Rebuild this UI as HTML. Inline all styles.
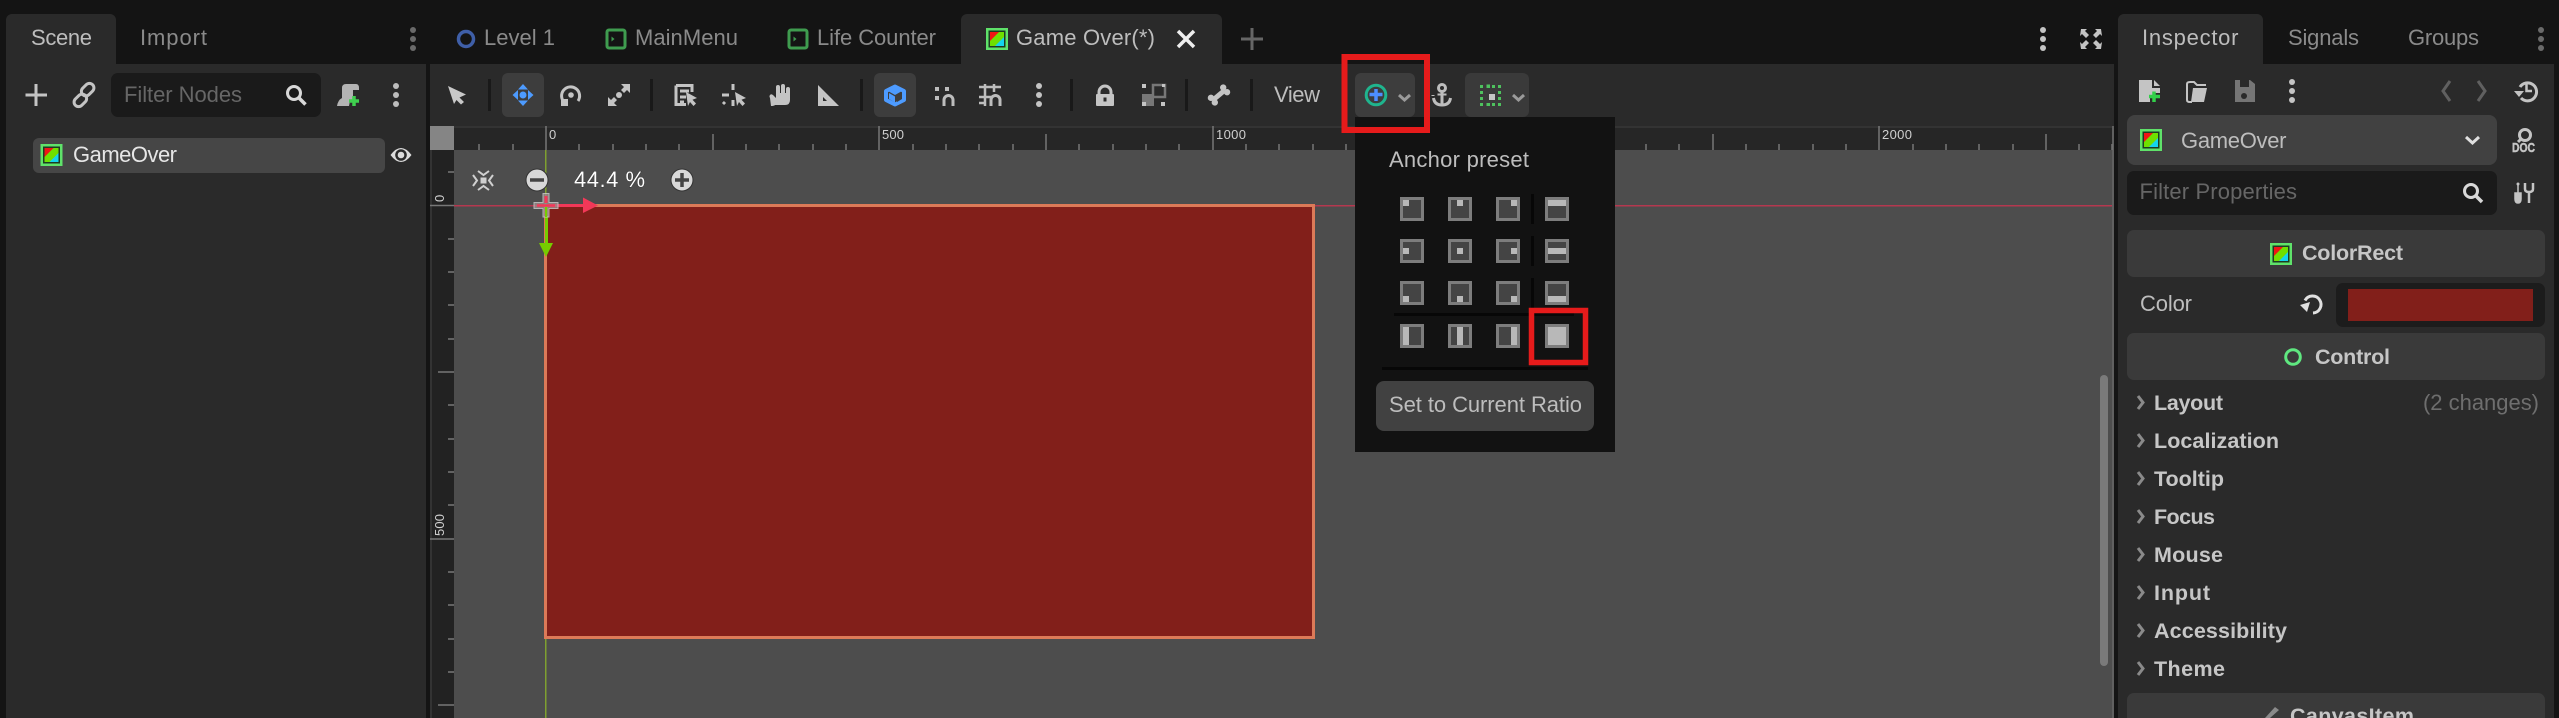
<!DOCTYPE html>
<html><head><meta charset="utf-8"><title>Godot Editor</title>
<style>
html,body{margin:0;padding:0;background:#141414;overflow:hidden;width:2559px;height:718px}
svg{display:block}
text{font-family:"Liberation Sans",sans-serif;font-size:22px;fill:#bdbdbd}
.d{fill:#8a8a8a}
.b{font-weight:700;fill:#c6c6c6;font-size:21.5px}
.r{font-size:13px;fill:#cfcfcf}
.p{fill:#666}
.i{fill:none;stroke:#c4c4c4;stroke-width:3}
</style></head><body>
<svg width="2559" height="718" viewBox="0 0 2559 718" xmlns="http://www.w3.org/2000/svg">
<defs>
<g id="n"><rect width="22" height="22" fill="#5fe26a"/><rect x="2.5" y="2.5" width="17" height="17" fill="#1d3a22"/><rect x="4" y="4" width="14" height="14" fill="#6fe000"/><path d="M4 4H13L4 13Z" fill="#f01414"/><path d="M18 18H9L18 9Z" fill="#14d4ee"/></g>
<g id="m"><rect x="1.5" y="1.5" width="18" height="18" rx="2" fill="#141414" stroke="#3f9c4f" stroke-width="3"/><path d="M6 8L9 10.5L6 13Z" fill="#3f9c4f"/></g>
</defs>
<rect width="2559" height="718" fill="#141414"/>

<!-- left dock -->
<path d="M6 64V20a6 6 0 0 1 6-6H110a6 6 0 0 1 6 6V64H426V718H6Z" fill="#2a2a2a"/>
<text x="31" y="45" textLength="61" lengthAdjust="spacing">Scene</text>
<text x="140" y="45" textLength="67" lengthAdjust="spacing" class="d">Import</text>
<g fill="#6a6a6a"><circle cx="413" cy="30" r="3"/><circle cx="413" cy="39" r="3"/><circle cx="413" cy="48" r="3"/></g>
<path d="M25.500 95H47M36 84V106" class="i"/>
<g class="i"><rect x="73" y="96" width="14" height="9" rx="4.500" transform="rotate(-45 80 100)"/><rect x="81" y="85" width="14" height="9" rx="4.500" transform="rotate(-45 88 90)"/></g>
<rect x="111" y="73" width="210" height="44" rx="7" fill="#1a1a1a"/>
<text x="124" y="102" textLength="118" lengthAdjust="spacing" class="p">Filter Nodes</text>
<circle cx="294" cy="93" r="6.500" fill="none" stroke="#d8d8d8" stroke-width="3"/><path d="M299 98L305.500 104.500" stroke="#d8d8d8" stroke-width="3.500"/>
<path d="M346 84H356Q359 84 359 88V90H353V101H350L349 106H337Q338 100 342 98V88Q342 84 346 84Z" fill="#b3b3b3"/><path d="M354 96V106M349 101H359" stroke="#3fd04f" stroke-width="3.500"/>
<g fill="#bdbdbd"><circle cx="396" cy="86" r="3"/><circle cx="396" cy="95" r="3"/><circle cx="396" cy="104" r="3"/></g>
<rect x="33" y="138" width="352" height="35" rx="6" fill="#464646"/>
<use href="#n" x="40.500" y="144"/>
<text x="73" y="162" textLength="104" lengthAdjust="spacing" style="fill:#e6e6e6">GameOver</text>
<path d="M390.500 155Q401 141 411.500 155Q401 169 390.500 155Z" fill="#dcdcdc"/><circle cx="401" cy="155" r="5.800" fill="#2a2a2a"/><circle cx="401" cy="155" r="3.300" fill="#dcdcdc"/>

<!-- top tabs -->
<circle cx="466" cy="39" r="7.500" fill="none" stroke="#3f5fa8" stroke-width="3.500"/>
<text x="484" y="45" textLength="71" lengthAdjust="spacing" class="d">Level 1</text>
<use href="#m" x="605.500" y="28.500"/>
<text x="635" y="45" textLength="103" lengthAdjust="spacing" class="d">MainMenu</text>
<use href="#m" x="787.500" y="28.500"/>
<text x="817" y="45" textLength="119" lengthAdjust="spacing" class="d">Life Counter</text>
<path d="M961 64V20a6 6 0 0 1 6-6H1216a6 6 0 0 1 6 6V64Z" fill="#2a2a2a"/>
<use href="#n" x="986" y="28"/>
<text x="1016" y="45" textLength="139" lengthAdjust="spacing">Game Over(*)</text>
<path d="M1178 31L1194 47M1194 31L1178 47" stroke="#eee" stroke-width="3.500"/>
<path d="M1241 39H1263M1252 28V50" stroke="#666" stroke-width="3"/>
<g fill="#c4c4c4"><circle cx="2043" cy="30" r="3"/><circle cx="2043" cy="39" r="3"/><circle cx="2043" cy="48" r="3"/></g>
<path d="M2081 29H2087L2085 31L2089 35L2086 38L2082 34L2080 36ZM2101 29H2095L2097 31L2093 35L2096 38L2100 34L2102 36ZM2081 49H2087L2085 47L2089 43L2086 40L2082 44L2080 42ZM2101 49H2095L2097 47L2093 43L2096 40L2100 44L2102 42Z" fill="#c4c4c4"/>

<!-- main toolbar -->
<rect x="430" y="64" width="1684" height="62" fill="#2a2a2a"/>
<g fill="#191919"><rect x="488" y="79" width="3" height="32"/><rect x="650" y="79" width="3" height="32"/><rect x="860" y="79" width="3" height="32"/><rect x="1070" y="79" width="3" height="32"/><rect x="1185" y="79" width="3" height="32"/><rect x="1250" y="79" width="3" height="32"/></g>
<path d="M448 86L466 94.500L459.500 97.500L464 102L461 104.500L456.500 100L454 104Z" fill="#c8c8c8"/>
<rect x="502" y="73" width="42" height="44" rx="6" fill="#3d3d3d"/>
<g fill="#4d9bff"><circle cx="523" cy="95" r="3.500"/><path d="M523 84L528 89.500H518ZM523 106L528 100.500H518ZM512.500 95L518 90V100ZM533.500 95L528 90V100Z"/></g>
<path d="M564.500 102.500A9 9 0 1 1 578 101" fill="none" stroke="#c4c4c4" stroke-width="3"/><circle cx="571" cy="95" r="2.800" fill="#c4c4c4"/><path d="M561 99H568V106H561Z" fill="#c4c4c4"/>
<g fill="#c4c4c4"><circle cx="619" cy="95" r="3"/><path d="M621 84H630V93L627 90L624 93L621 90L624 87ZM608 106V97L611 100L614 97L617 100L614 103L617 106Z"/></g>
<path d="M676 85.500H692V92M676 85.500V104.500H686M680 91H689M680 97H686M680 102H684" fill="none" stroke="#c4c4c4" stroke-width="3"/><path d="M686 92L697 98L692.500 99.800L696 103.500L693.500 106L690 102L688 106Z" fill="#c4c4c4"/>
<path d="M733 84V90M722 95H729M733 100V106M725 102L723 104" stroke="#c4c4c4" stroke-width="3"/><path d="M735 92L746 98L741.500 99.800L745 103.500L742.500 106L739 102L737 106Z" fill="#c4c4c4"/>
<path d="M771 106Q774 106 775 105H785Q790 105 790 100V89Q790 87 788 87Q786 87 786 89V93H785V86Q785 84 783 84Q781 84 781 86V93H780V87Q780 85 778 85Q776 85 776 87V98L773 95Q771 93.500 770 95Q769 96 770 98Z" fill="#c4c4c4"/>
<path fill-rule="evenodd" d="M818 85L839 106H818ZM823 97V101H827Z" fill="#c4c4c4"/>
<rect x="874" y="73" width="42" height="44" rx="6" fill="#3d3d3d"/>
<path d="M895 86.500L904 91V100L895 104.500L886 100V91Z" fill="#3d3d3d" stroke="#4d9bff" stroke-width="4" stroke-linejoin="round"/><path d="M888 91L895 95L902 91L895 87.500ZM895 96.500L889 93V99L895 102.500Z" fill="#4d9bff"/><path d="M897 96V102L902 99V93Z" fill="#3d3d3d"/>
<g fill="#bdbdbd"><rect x="935" y="87" width="4" height="4"/><rect x="945" y="87" width="4" height="4"/><rect x="935" y="96" width="4" height="4"/></g>
<path d="M944 106V100A4.500 4.500 0 0 1 953 100V106" fill="none" stroke="#bdbdbd" stroke-width="3"/>
<path d="M979 87H1001M979 97H992M979 103H986M985 84V106M994 84V92" fill="none" stroke="#bdbdbd" stroke-width="2.500"/><path d="M991 106V100A4.500 4.500 0 0 1 1000 100V106" fill="none" stroke="#bdbdbd" stroke-width="3"/>
<g fill="#c4c4c4"><circle cx="1039" cy="86" r="3"/><circle cx="1039" cy="95" r="3"/><circle cx="1039" cy="104" r="3"/></g>
<rect x="1096" y="94" width="18" height="12" rx="1" fill="#c4c4c4"/><path d="M1099 95V92A6 6 0 0 1 1111 92V95" fill="none" stroke="#c4c4c4" stroke-width="3"/><rect x="1103.500" y="97.500" width="3" height="4" fill="#2a2a2a"/>
<rect x="1142" y="94" width="12" height="12" fill="#777"/><rect x="1153" y="85" width="12" height="12" fill="none" stroke="#777" stroke-width="2.500"/>
<g fill="#c4c4c4"><rect x="1142" y="84" width="4" height="4"/><rect x="1162" y="84" width="3" height="3"/><rect x="1142" y="102" width="4" height="4"/><rect x="1161" y="102" width="4" height="4"/></g>
<g transform="rotate(-40 1219 95)" fill="#c4c4c4"><rect x="1212" y="92.500" width="14" height="5"/><circle cx="1211" cy="92" r="3.200"/><circle cx="1211" cy="98" r="3.200"/><circle cx="1227" cy="92" r="3.200"/><circle cx="1227" cy="98" r="3.200"/></g>
<text x="1274" y="102" textLength="46" lengthAdjust="spacing">View</text>
<rect x="1355" y="73" width="60" height="44" rx="6" fill="#3d3d3d"/>
<circle cx="1376" cy="95" r="9.800" fill="none" stroke="#1fb58e" stroke-width="3"/><path d="M1376 89V101M1369.500 94.500H1382.500" stroke="#4d8eff" stroke-width="3.500"/>
<path d="M1399 95L1404.500 100L1410 95" fill="none" stroke="#9a9a9a" stroke-width="3"/>
<rect x="1465" y="73" width="64" height="44" rx="6" fill="#3a3a3a"/>
<g fill="none" stroke="#bdbdbd" stroke-width="3"><circle cx="1442" cy="88" r="3.500"/><path d="M1442 92V105M1433 95V96"/><path d="M1433.500 98Q1434.500 105 1442 105Q1449.500 105 1450.500 98"/></g><path d="M1437.500 94.500H1446.500" stroke="#bdbdbd" stroke-width="2"/>
<g fill="#4ec25e"><rect x="1480" y="85" width="3" height="3"/><rect x="1486.500" y="84.500" width="3.500" height="3.500"/><rect x="1492" y="85" width="3" height="3"/><rect x="1498" y="85" width="3" height="3"/><rect x="1480" y="91" width="3" height="3"/><rect x="1498" y="91" width="3" height="3"/><rect x="1480" y="97" width="3" height="3"/><rect x="1498" y="97" width="3" height="3"/><rect x="1480" y="103" width="3" height="3"/><rect x="1486.500" y="103" width="3.500" height="3"/><rect x="1492" y="103" width="3" height="3"/><rect x="1498" y="103" width="3" height="3"/></g><rect x="1489" y="94" width="6" height="6" fill="#c4c4c4"/>
<path d="M1513 95L1518.500 100L1524 95" fill="none" stroke="#9a9a9a" stroke-width="3"/>

<!-- rulers / viewport -->
<rect x="454" y="150" width="1660" height="568" fill="#4d4d4d"/>
<rect x="2112" y="126" width="2" height="592" fill="#606060"/>
<rect x="430" y="126" width="1682" height="24" fill="#262626"/>
<rect x="430" y="126" width="1682" height="2" fill="#333"/>
<rect x="430" y="126" width="24" height="24" fill="#858585"/>
<rect x="430" y="150" width="2" height="568" fill="#333"/>
<rect x="432" y="150" width="22" height="568" fill="#222"/>
<path stroke="#777" stroke-width="1.500" fill="none" d="M479 144V150M513 144V150M579 144V150M613 144V150M646 144V150M679 144V150M746 144V150M779 144V150M813 144V150M846 144V150M913 144V150M946 144V150M979 144V150M1013 144V150M1079 144V150M1113 144V150M1146 144V150M1179 144V150M1246 144V150M1279 144V150M1313 144V150M1346 144V150M1413 144V150M1446 144V150M1479 144V150M1513 144V150M1579 144V150M1613 144V150M1646 144V150M1679 144V150M1746 144V150M1779 144V150M1813 144V150M1846 144V150M1913 144V150M1946 144V150M1979 144V150M2013 144V150M2079 144V150M2112 144V150M713 134V150M1046 134V150M1379 134V150M1713 134V150M2046 134V150M546 126V150M879 126V150M1213 126V150M1546 126V150M1879 126V150M448 172H454M448 239H454M448 272H454M448 305H454M448 339H454M448 405H454M448 439H454M448 472H454M448 505H454M448 572H454M448 605H454M448 639H454M448 672H454M438 372H454M438 705H454M430 205.500H454M430 539H454"/>
<text x="549" y="139" class="r" textLength="7" lengthAdjust="spacing">0</text>
<text x="882" y="139" class="r" textLength="22" lengthAdjust="spacing">500</text>
<text x="1216" y="139" class="r" textLength="30" lengthAdjust="spacing">1000</text>
<text x="1882" y="139" class="r" textLength="30" lengthAdjust="spacing">2000</text>
<text transform="translate(444 202) rotate(-90)" class="r" textLength="7" lengthAdjust="spacing">0</text>
<text transform="translate(444 536) rotate(-90)" class="r" textLength="22" lengthAdjust="spacing">500</text>

<!-- canvas -->
<rect x="454" y="205" width="1658" height="1.500" fill="#b5384f"/>
<rect x="545" y="150" width="1.500" height="568" fill="#7fa030"/>
<rect x="545.500" y="205.500" width="768" height="432" fill="#821f1a" stroke="#dc7a58" stroke-width="3"/>
<rect x="545" y="206" width="3" height="38" fill="#76cc00"/>
<path d="M539 243H553L546 257Z" fill="#76cc00"/>
<rect x="546" y="204" width="38" height="3" fill="#f23858"/>
<path d="M583 197.500L598 205.500L583 213Z" fill="#f23858"/>
<path d="M534 202.500H543V193.500H549V202.500H558V208.500H549V217H543V208.500H534Z" fill="#a08a8a" stroke="#d0d0d0" stroke-width="1" opacity=".8"/>
<path d="M537 205.500H555" stroke="#f23858" stroke-width="2.500"/><path d="M546 196V203" stroke="#f23858" stroke-width="3"/>
<path d="M546 207V217" stroke="#76cc00" stroke-width="2"/>

<!-- zoom widget -->
<rect x="480.500" y="177.500" width="6" height="6" fill="#d0d0d0"/>
<path d="M473 175L477 180.500L473 186M493 175L489 180.500L493 186M478 171L483.500 175L489 171M478 190L483.500 186L489 190" fill="none" stroke="#d0d0d0" stroke-width="2"/>
<circle cx="537" cy="180" r="11" fill="#d8d8d8" stroke="#333" stroke-width="1"/><path d="M530 180H544" stroke="#444" stroke-width="3.500"/>
<text x="574" y="187" textLength="71" lengthAdjust="spacing" style="fill:#fff;stroke:#222;stroke-width:.6;paint-order:stroke">44.4 %</text>
<circle cx="682" cy="180" r="11" fill="#d8d8d8" stroke="#333" stroke-width="1"/><path d="M675 180H689M682 173V187" stroke="#444" stroke-width="3.500"/>

<!-- scrollbar -->
<rect x="2100" y="375" width="8" height="291" rx="4" fill="#7a7a7a"/>

<!-- popup -->
<rect x="1355" y="117" width="260" height="335" fill="#121212"/>
<text x="1389" y="167" textLength="140" lengthAdjust="spacing">Anchor preset</text>
<g fill="#444" stroke="#7d7d7d" stroke-width="3">
<rect x="1401.500" y="198.500" width="21" height="21"/><rect x="1449.500" y="198.500" width="21" height="21"/><rect x="1497.500" y="198.500" width="21" height="21"/><rect x="1546.500" y="198.500" width="21" height="21"/>
<rect x="1401.500" y="240.500" width="21" height="21"/><rect x="1449.500" y="240.500" width="21" height="21"/><rect x="1497.500" y="240.500" width="21" height="21"/><rect x="1546.500" y="240.500" width="21" height="21"/>
<rect x="1401.500" y="282.500" width="21" height="21"/><rect x="1449.500" y="282.500" width="21" height="21"/><rect x="1497.500" y="282.500" width="21" height="21"/><rect x="1546.500" y="282.500" width="21" height="21"/>
<rect x="1401.500" y="325.500" width="21" height="21"/><rect x="1449.500" y="325.500" width="21" height="21"/><rect x="1497.500" y="325.500" width="21" height="21"/><rect x="1546.500" y="325.500" width="21" height="21"/>
</g>
<g fill="#b8b8b8">
<rect x="1403" y="200" width="6" height="6"/><rect x="1457" y="200" width="6" height="6"/><rect x="1511" y="200" width="6" height="6"/><rect x="1548" y="200" width="18" height="6"/>
<rect x="1403" y="248" width="6" height="6"/><rect x="1457" y="248" width="6" height="6"/><rect x="1511" y="248" width="6" height="6"/><rect x="1548" y="248" width="18" height="6"/>
<rect x="1403" y="296" width="6" height="6"/><rect x="1457" y="296" width="6" height="6"/><rect x="1511" y="296" width="6" height="6"/><rect x="1548" y="296" width="18" height="6"/>
<rect x="1403" y="327" width="6" height="18"/><rect x="1457" y="327" width="6" height="18"/><rect x="1511" y="327" width="6" height="18"/><rect x="1548" y="327" width="18" height="18"/>
</g>
<g fill="#070707"><rect x="1531" y="194" width="3" height="30"/><rect x="1531" y="236" width="3" height="30"/><rect x="1531" y="278" width="3" height="30"/><rect x="1394" y="313" width="180" height="3"/><rect x="1382" y="367" width="206" height="3"/></g>
<rect x="1376" y="381" width="218" height="50" rx="8" fill="#414141"/>
<text x="1389" y="412" textLength="193" lengthAdjust="spacing">Set to Current Ratio</text>

<!-- red annotations -->
<rect x="1344.500" y="57" width="82.500" height="73" fill="none" stroke="#e61b1b" stroke-width="6"/>
<rect x="1531.500" y="310.500" width="54" height="52" fill="none" stroke="#e61b1b" stroke-width="5.500"/>

<!-- inspector -->
<path d="M2118 718V20a6 6 0 0 1 6-6H2257a6 6 0 0 1 6 6V64H2554V718Z" fill="#2a2a2a"/>
<text x="2142" y="45" textLength="96.500" lengthAdjust="spacing">Inspector</text>
<text x="2288" y="45" textLength="71" lengthAdjust="spacing" class="d">Signals</text>
<text x="2408" y="45" textLength="71" lengthAdjust="spacing" class="d">Groups</text>
<g fill="#6a6a6a"><circle cx="2541" cy="30" r="3"/><circle cx="2541" cy="39" r="3"/><circle cx="2541" cy="48" r="3"/></g>
<path d="M2139 80H2152V88H2160V93H2154V96.500H2150V102H2139Z" fill="#c4c4c4"/><path d="M2154 80L2160 86H2154Z" fill="#c4c4c4"/><path d="M2154 91.500V102M2149 96.500H2160" stroke="#33d04a" stroke-width="3.500"/>
<path d="M2187 84V100Q2187 102 2190 102H2192" fill="none" stroke="#c4c4c4" stroke-width="2"/><path d="M2187 84Q2187 82 2190 82H2194L2197 85H2206" fill="none" stroke="#c4c4c4" stroke-width="2"/><path d="M2193 88H2207L2204 102H2191Z" fill="#c4c4c4"/>
<path fill-rule="evenodd" d="M2235 80H2250L2255 84V102H2235ZM2240 80V87H2249V80Z" fill="#757575"/><circle cx="2244" cy="96" r="3" fill="#2a2a2a"/>
<g fill="#c4c4c4"><circle cx="2292" cy="82" r="3"/><circle cx="2292" cy="91" r="3"/><circle cx="2292" cy="100" r="3"/></g>
<path d="M2450 81L2443 91L2450 101" fill="none" stroke="#606060" stroke-width="3"/><path d="M2478 81L2485 91L2478 101" fill="none" stroke="#606060" stroke-width="3"/>
<path d="M2520 87A9 9 0 1 1 2521 98" fill="none" stroke="#c4c4c4" stroke-width="3"/><path d="M2514 91H2524L2519 97Z" fill="#c4c4c4"/><path d="M2526.500 84V91H2532" fill="none" stroke="#c4c4c4" stroke-width="2.500"/>
<rect x="2127" y="115" width="370" height="50" rx="8" fill="#414141"/>
<use href="#n" x="2140" y="129"/>
<text x="2181" y="148" textLength="105.500" lengthAdjust="spacing">GameOver</text>
<path d="M2466 137L2472.500 143L2479 137" fill="none" stroke="#e0e0e0" stroke-width="3"/>
<circle cx="2525" cy="135" r="5.500" fill="none" stroke="#c4c4c4" stroke-width="3"/><path d="M2521 139L2518 142" stroke="#c4c4c4" stroke-width="3"/>
<text x="2512" y="152" style="font-size:13px;font-weight:700;fill:#c4c4c4;stroke:#c4c4c4;stroke-width:.5" textLength="23" lengthAdjust="spacingAndGlyphs">DOC</text>
<rect x="2127" y="171" width="370" height="44" rx="7" fill="#1a1a1a"/>
<text x="2139.500" y="199" textLength="157.500" lengthAdjust="spacing" class="p">Filter Properties</text>
<circle cx="2471" cy="191" r="6.500" fill="none" stroke="#d8d8d8" stroke-width="3"/><path d="M2476 196L2482 202" stroke="#d8d8d8" stroke-width="3.500"/>
<path d="M2518 183V193M2515 193H2521V199Q2521 203 2518 203Q2515 203 2515 199Z" fill="#c4c4c4" stroke="#c4c4c4" stroke-width="1.500"/><circle cx="2518" cy="184" r="1.500" fill="#c4c4c4"/>
<path d="M2525 183V189Q2525 192 2529 192Q2533 192 2533 189V183M2529 192V203" fill="none" stroke="#c4c4c4" stroke-width="2.500"/>
<rect x="2127" y="230" width="418" height="47" rx="7" fill="#3a3a3a"/>
<use href="#n" x="2270" y="243"/>
<text x="2302" y="260" textLength="101" lengthAdjust="spacing" class="b">ColorRect</text>
<text x="2140" y="311" textLength="52" lengthAdjust="spacing">Color</text>
<path d="M2305 300.500A8.500 8.500 0 1 1 2313 313" fill="none" stroke="#e0e0e0" stroke-width="3"/><path d="M2300 305L2310 302L2307 312Z" fill="#e0e0e0"/>
<rect x="2336" y="283" width="209" height="44" rx="7" fill="#1c1c1c"/>
<rect x="2348" y="289" width="185" height="32" fill="#821f1a"/>
<rect x="2127" y="333" width="418" height="47" rx="7" fill="#3a3a3a"/>
<circle cx="2293" cy="357" r="7.300" fill="none" stroke="#5fe880" stroke-width="3"/>
<text x="2315" y="364" textLength="75" lengthAdjust="spacing" class="b">Control</text>
<g fill="none" stroke="#8a8a8a" stroke-width="3"><path d="M2138 396L2143 402.500L2138 409"/><path d="M2138 434L2143 440.500L2138 447"/><path d="M2138 472L2143 478.500L2138 485"/><path d="M2138 510L2143 516.500L2138 523"/><path d="M2138 548L2143 554.500L2138 561"/><path d="M2138 586L2143 592.500L2138 599"/><path d="M2138 624L2143 630.500L2138 637"/><path d="M2138 662L2143 668.500L2138 675"/></g>
<text x="2154" y="410" textLength="69" lengthAdjust="spacing" class="b">Layout</text>
<text x="2423" y="410" textLength="116" lengthAdjust="spacing" style="fill:#6e6e6e">(2 changes)</text>
<text x="2154" y="448" textLength="125" lengthAdjust="spacing" class="b">Localization</text>
<text x="2154" y="486" textLength="70" lengthAdjust="spacing" class="b">Tooltip</text>
<text x="2154" y="524" textLength="61" lengthAdjust="spacing" class="b">Focus</text>
<text x="2154" y="562" textLength="69" lengthAdjust="spacing" class="b">Mouse</text>
<text x="2154" y="600" textLength="56" lengthAdjust="spacing" class="b">Input</text>
<text x="2154" y="638" textLength="133" lengthAdjust="spacing" class="b">Accessibility</text>
<text x="2154" y="676" textLength="71" lengthAdjust="spacing" class="b">Theme</text>
<rect x="2127" y="693" width="418" height="40" rx="7" fill="#3a3a3a"/>
<path d="M2265 718L2275 707L2279 710L2270 718Z" fill="#8a8a8a"/>
<text x="2290" y="723" textLength="124" lengthAdjust="spacing" class="b">CanvasItem</text>
</svg>
</body></html>
